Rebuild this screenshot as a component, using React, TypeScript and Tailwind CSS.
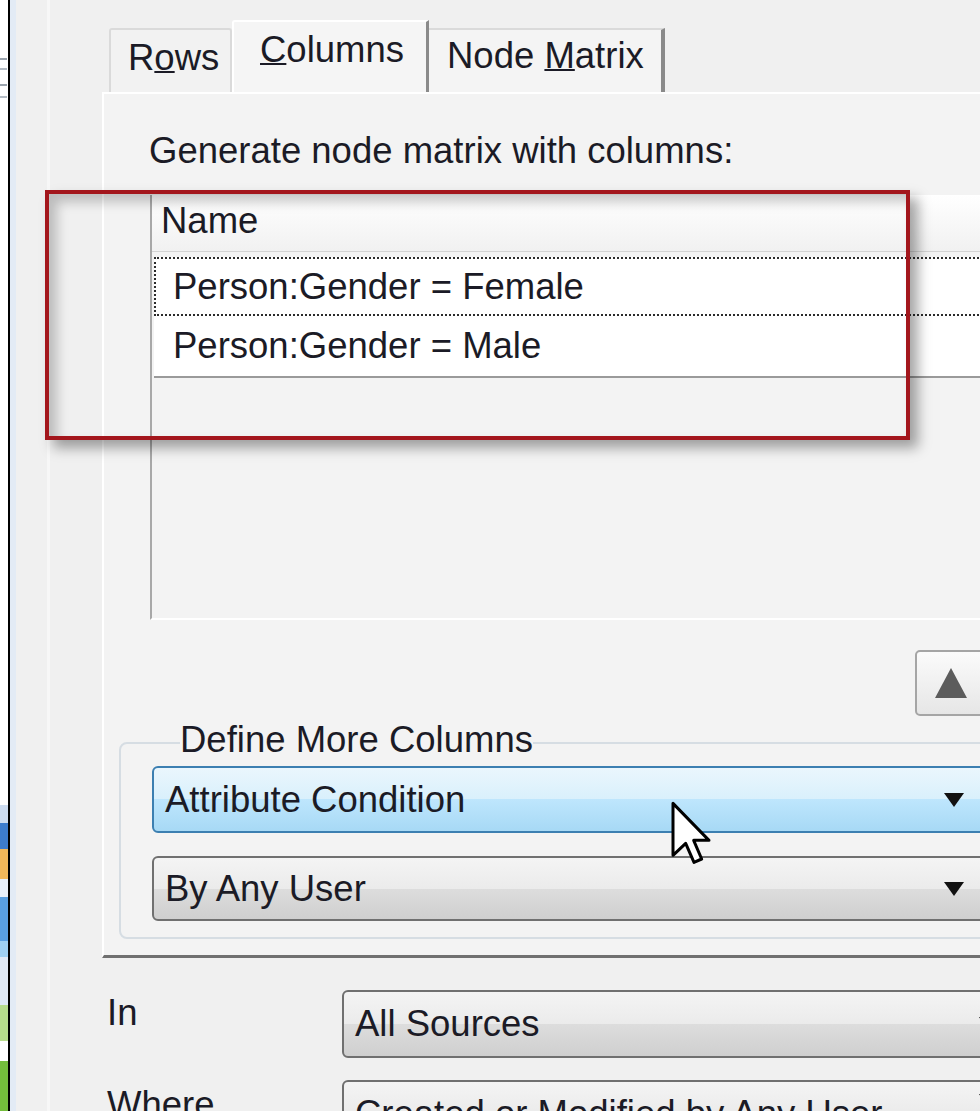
import React from "react";

interface ComboProps {
  text: string;
  hot?: boolean;
  className: string;
}

const DownArrow = () => (
  <svg viewBox="0 0 20 14" className="h-[14px] w-[22px] shrink-0">
    <path d="M0 0h20L10 14z" fill="#111" />
  </svg>
);

const Combo = ({ text, hot, className }: ComboProps) => (
  <div
    className={`flex shrink-0 items-center rounded-[6px] border-2 pl-[11px] pr-[40px] ${
      hot
        ? "border-[#3c7fb1] bg-[linear-gradient(to_bottom,#eaf6fd_0%,#d9f0fc_50%,#bee6fd_50%,#a7d9f5_100%)]"
        : "border-[#707070] bg-[linear-gradient(to_bottom,#f4f4f4_0%,#ebebeb_50%,#dddddd_50%,#cfcfcf_100%)]"
    } ${className}`}
  >
    <span className="flex-1 whitespace-nowrap">{text}</span>
    <DownArrow />
  </div>
);

const SideStrip = () => (
  <div className="flex w-[10px] shrink-0 flex-col border-r-2 border-black bg-white">
    <div className="mt-[58px] h-[2px] w-[7px] bg-[#9aa3ad]" />
    <div className="mt-[8px] h-[2px] w-[7px] bg-[#b4bcc5]" />
    <div className="mt-[14px] h-[2px] w-[7px] bg-[#9aa3ad]" />
    <div className="mt-[10px] h-[2px] w-[7px] bg-[#b4bcc5]" />
    <div className="mt-auto h-[18px] bg-[#cddcf0]" />
    <div className="h-[26px] bg-[#3d7ccc]" />
    <div className="h-[30px] bg-[#f2b85a]" />
    <div className="h-[18px] bg-[#e8f0fa]" />
    <div className="h-[44px] bg-[#5a9fe0]" />
    <div className="h-[16px] bg-[#9fd0f2]" />
    <div className="h-[48px] bg-[#dfe9f5]" />
    <div className="h-[36px] bg-[#b7dc8c]" />
    <div className="h-[20px] bg-white" />
    <div className="h-[50px] bg-[#74bd3c]" />
  </div>
);

const Cursor = () => (
  <svg
    viewBox="0 0 12 19"
    className="pointer-events-none absolute left-[671px] top-[801px] h-[64px] w-[40px]"
  >
    <path
      d="M0.6 0.6 L0.6 16.2 L4.4 12.6 L6.9 18.3 L9.2 17.3 L6.8 11.7 L11.4 11.7 Z"
      fill="#fff"
      stroke="#000"
      strokeWidth="0.9"
      strokeLinejoin="round"
    />
  </svg>
);

export default function App() {
  return (
    <div className="relative flex h-[1111px] w-[980px] overflow-hidden bg-[#f0f0f0] font-['Liberation_Sans',Arial,sans-serif] text-[36.5px] leading-[40px] text-[#1b1b26]">
      <SideStrip />
      <div className="w-[6px] shrink-0 bg-[#e3ebf5]" />
      <div className="w-[34px] shrink-0 border-r-[3px] border-[#f7f7f7]" />

      <div className="flex w-[1000px] shrink-0 flex-col pl-[52px] pt-[20px]">
        {/* tabs */}
        <div className="ml-[7px] flex h-[72px] shrink-0 items-end">
          <div className="h-[64px] w-[123px] rounded-t-[3px] border-2 border-b-0 border-[#dadada] bg-[#f2f2f2] pl-[17px] pt-[8px]">
            R<u className="decoration-2">o</u>ws
          </div>
          <div className="h-[72px] w-[197px] rounded-tl-[3px] border-l-2 border-t-2 border-r-[3px] border-l-white border-t-white border-r-[#8a8a8a] bg-[#f5f5f5] pl-[26px] pt-[8px]">
            <u className="decoration-2">C</u>olumns
          </div>
          <div className="h-[64px] w-[236px] border-t-2 border-r-[4px] border-t-[#dadada] border-r-[#8a8a8a] bg-[#f4f4f4] pl-[18px] pt-[6px]">
            Node <u className="decoration-2">M</u>atrix
          </div>
        </div>

        {/* tab panel */}
        <div className="flex h-[866px] w-[940px] shrink-0 flex-col border-l-2 border-t-2 border-b-[3px] border-l-white border-t-white border-b-[#707070] bg-[#f3f3f3]">
          <p className="ml-[45px] mt-[37px] whitespace-nowrap">Generate node matrix with columns:</p>

          <div className="ml-[46px] mt-[24px] flex h-[425px] w-[900px] shrink-0 flex-col border-l-2 border-b-2 border-l-[#a8a8a8] border-b-white">
            <div className="h-[57px] shrink-0 border-b border-[#d3d3d3] bg-[linear-gradient(to_bottom,#ffffff,#f1f1f1)] pl-[9px] pt-[6px]">
              Name
            </div>
            <div className="ml-[2px] mt-[5px] flex h-[59px] shrink-0 items-center border-2 border-dotted border-[#2b2b2b] bg-white pl-[17px]">
              Person:Gender = Female
            </div>
            <div className="ml-[2px] flex h-[62px] shrink-0 items-center border-b-2 border-[#9a9a9a] bg-white pl-[19px]">
              Person:Gender = Male
            </div>
          </div>

          <div className="ml-[811px] mt-[30px] flex h-[66px] w-[70px] shrink-0 items-center rounded-[5px] border-2 border-[#a5a5a5] bg-[linear-gradient(to_bottom,#fbfbfb,#e6e6e6)] pl-[18px]">
            <svg viewBox="0 0 32 30" className="h-[30px] w-[32px]">
              <path d="M16 0L32 30H0z" fill="#5c5c5c" />
            </svg>
          </div>

          <fieldset className="ml-[15px] mt-[4px] flex w-[880px] shrink-0 flex-col gap-[23px] rounded-[8px] border-2 border-[#d6dde3] pb-[16px] pl-[31px]">
            <legend className="ml-[28px] whitespace-nowrap pb-[6px]">Define More Columns</legend>
            <Combo text="Attribute Condition" hot className="h-[67px] w-[855px]" />
            <Combo text="By Any User" className="h-[65px] w-[855px]" />
          </fieldset>
        </div>

        {/* filters */}
        <div className="mt-[32px] flex shrink-0">
          <div className="w-[240px] shrink-0 pl-[5px] pt-[3px]">In</div>
          <Combo text="All Sources" className="h-[68px] w-[700px]" />
        </div>
        <div className="mt-[22px] flex shrink-0">
          <div className="w-[240px] shrink-0 pl-[5px] pt-[5px]">Where</div>
          <Combo text="Created or Modified by Any User" className="h-[68px] w-[700px] items-start pt-[12px]" />
        </div>
      </div>

      {/* annotation */}
      <div className="pointer-events-none absolute left-[45px] top-[190px] h-[250px] w-[865px] border-4 border-[#a3161c] shadow-[8px_8px_12px_rgba(0,0,0,0.35),inset_8px_8px_12px_rgba(0,0,0,0.22)]" />
      <Cursor />
    </div>
  );
}
